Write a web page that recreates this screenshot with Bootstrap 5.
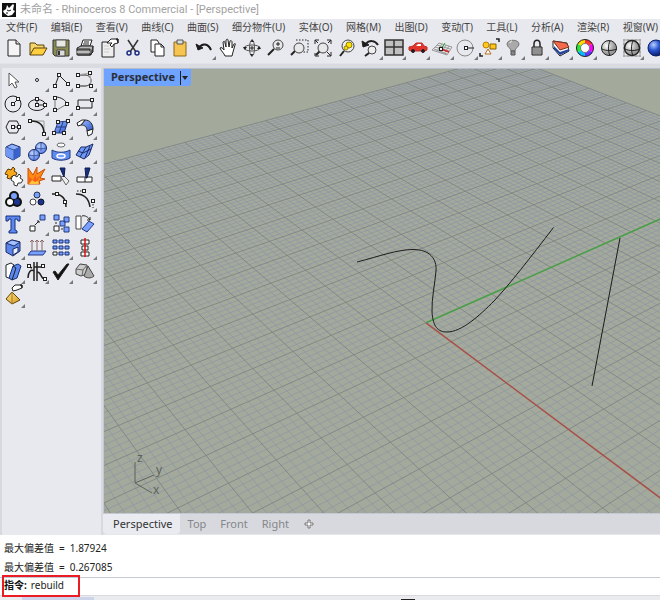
<!DOCTYPE html>
<html lang="zh-CN">
<head>
<meta charset="utf-8">
<meta name="viewport" content="width=device-width, initial-scale=1">
<title>未命名 - Rhinoceros 8 Commercial - [Perspective]</title>
<link rel="stylesheet" href="https://cdn.jsdelivr.net/npm/bootstrap@5.3.0/dist/css/bootstrap.min.css">
<style>
body{font-family:"Noto Sans","Noto Sans CJK SC",sans-serif;font-size:11px;line-height:16px;color:#222;background:#d8d9de}
.app-title{height:19px;color:#a2a2a2;padding:0 2px;font-family:Roboto,"Noto Sans CJK SC",sans-serif}
.app-title svg{width:14px;height:14px}
.app-menu{background:#e8e9ee;height:17px;padding:0 2px 0 6px}
.app-menu a{color:#444;text-decoration:none;white-space:nowrap;line-height:17px;font-size:10px}
.tool-strip{background:#e8e9ee;height:28px;border-bottom:1px solid #e2e3e8}
.tool-grid{display:grid;grid-template-columns:repeat(28,minmax(0,1fr));padding-left:2px;margin-right:-8px}
.strip-gap{height:4px;background:#d9dbe0}
.tool-panel{background:#e8e9ee;width:99px;margin-left:2px;margin-right:2px}
.panel-grid{display:grid;grid-template-columns:repeat(4,24px);margin-left:-1px}
.tool{display:flex;justify-content:center;position:relative;height:24px;padding:0;border:0;border-radius:0}
.tool svg{width:24px;height:24px;flex-shrink:0;fill:none;stroke:#222;stroke-width:1}
.fly::after{content:"";position:absolute;right:0;bottom:0;border:2px solid transparent;border-right-color:#777;border-bottom-color:#777}
.view-area{border-top:1px solid #b4bccb;border-left:1px solid #c3c9d4;background:#a3a99b}
.view-area>svg{display:block;width:100%;height:100%}
.view-label{position:absolute;left:0;top:0;height:17px;background:#6ea3ff;border-radius:0 0 3px 0;color:#2a2e38;font-size:11px;font-weight:700;padding:0 2px 0 6px;gap:5px}
.view-label span{border-left:1px solid #222;height:14px;padding:5px 0 0 1px}
.view-label svg{width:6px;height:4px;display:block}
.view-tabs{height:22px;border-top:1px solid #c3c8d2;border-bottom:1px solid #e6e7ea}
.view-tabs .btn{font-size:11px;line-height:16px;padding:1px 7px;border:0;border-radius:0 0 4px 4px;color:#85868a}
.view-tabs .btn.active{background:#e9ebf0;color:#333;padding:1px 7px 2px 10px;margin-right:1px}
.history{background:#fff;height:42px;padding:4px 4px 0;font-size:10px;line-height:19px;color:#222}
.history>div{gap:5px}
.command{background:#fff;height:19px;border-top:1px solid #c4cad4;border-bottom:1px solid #d8dade;font-size:10px;padding-left:4px}
.command label{font-weight:700;color:#111;line-height:14px}
.command input{border:0;outline:0;padding:0;font-size:10px;line-height:14px;height:14px;color:#222;background:transparent}
.hilite{position:absolute;left:2px;top:-3px;width:78px;height:22px;border:2px solid #ec1c24;pointer-events:none}
.status-strip{height:4px;background:#e9ebee;padding-left:22px}
.status-tab{width:72px;height:3px;background:#cdd4ea}
.status-mark{width:14px;height:1px;background:#222;margin-left:307px}
</style>
</head>
<body>
<svg width="0" height="0" class="position-absolute" aria-hidden="true">
<defs>
<rect id="n" x="-1.500" y="-1.500" width="3" height="3" fill="#fff" stroke="#222"/>
<linearGradient id="gb" x2="1" y2="1"><stop stop-color="#9fbcff"/><stop offset="1" stop-color="#2c55c8"/></linearGradient>
<linearGradient id="gy" x2="1" y2="1"><stop stop-color="#ffe48a"/><stop offset="1" stop-color="#d79a1c"/></linearGradient>
<radialGradient id="gs" cx=".35" cy=".35"><stop stop-color="#fff"/><stop offset="1" stop-color="#9a9a9a"/></radialGradient>
<radialGradient id="gn" cx=".35" cy=".3" r=".7"><stop stop-color="#b9d0ff"/><stop offset=".5" stop-color="#2a55d0"/><stop offset="1" stop-color="#0a1c70"/></radialGradient>
<radialGradient id="gl" cx=".4" cy=".35" r=".65"><stop stop-color="#c4d6ff"/><stop offset="1" stop-color="#5c84e8"/></radialGradient>
</defs>
</svg>
<div class="d-flex flex-column vh-100 overflow-hidden">
<header class="app-title bg-white d-flex align-items-center gap-1 flex-shrink-0">
<svg viewBox="0 0 14 14"><path d="M0 0h14v14H0z" fill="#111"/><path d="M1 8l3-2 1-4 2 3 4-4 1 1-1 5 2 1-3 4-4 1-4-3z" fill="#fff"/><path d="M5 7l2 1 2-1M4 10l2 0" stroke="#111" fill="none"/></svg>
<span>未命名 - Rhinoceros 8 Commercial - [Perspective]</span>
</header>
<nav class="app-menu d-flex justify-content-between flex-shrink-0">
<a href="#">文件(F)</a><a href="#">编辑(E)</a><a href="#">查看(V)</a><a href="#">曲线(C)</a><a href="#">曲面(S)</a><a href="#">细分物件(U)</a><a href="#">实体(O)</a><a href="#">网格(M)</a><a href="#">出图(D)</a><a href="#">变动(T)</a><a href="#">工具(L)</a><a href="#">分析(A)</a><a href="#">渲染(R)</a><a href="#">视窗(W)</a>
</nav>
<div class="tool-strip flex-shrink-0 overflow-hidden">
<div class="tool-grid">
<button class="btn tool" aria-label="New"><svg viewBox="0 0 24 24"><path d="M6 4h8l4 4v12H6z" fill="#f4f4f4"/><path d="M14 4v4h4" fill="#ddd"/></svg></button>
<button class="btn tool" aria-label="Open"><svg viewBox="0 0 24 24"><path d="M4 19V7h5l2 2h7v3" fill="#f6d66a" stroke="#5a4410"/><path d="M4 19l4-7h13l-4 7z" fill="#ffcf3f" stroke="#5a4410"/></svg></button>
<button class="btn tool fly" aria-label="Save"><svg viewBox="0 0 24 24"><path d="M4 4h16v16H6l-2-2z" fill="#8b8a50" stroke="#333"/><path d="M7 4h10v7H7z" fill="#e9e9e4" stroke="#555"/><path d="M8 14h8v6H8z" fill="#ddd" stroke="#444"/><path d="M10 15v4" stroke="#333" stroke-width="2"/></svg></button>
<button class="btn tool" aria-label="Print"><svg viewBox="0 0 24 24"><path d="M8 10l2-6h9l-2 6z" fill="#fff"/><path d="M11 6h5M10 8h6"/><path d="M4 12l4-2h12l-2 9H5z" fill="#bbb"/><path d="M4 13h13v6H4z" fill="#777"/><path d="M4 16h13" stroke="#fff"/><path d="M17 19l3-3v-6" fill="#555"/></svg></button>
<button class="btn tool" aria-label="Properties"><svg viewBox="0 0 24 24"><path d="M5 6h12v15H5z" fill="#eee"/><path d="M7 10h5M7 13h6M7 16h5" stroke="#ccc"/><path d="M10 7l4-4h7v4l-4 1-2 3-2-2 2-2z" fill="#fff"/><path d="M19 3h2v4" fill="#222"/></svg></button>
<button class="btn tool" aria-label="Cut"><svg viewBox="0 0 24 24"><path d="M7 4l8 12M17 4L9 16" stroke="#333" stroke-width="1.500"/><circle cx="8" cy="17" r="2" stroke="#1e2f80" stroke-width="1.500"/><circle cx="16" cy="17" r="2" stroke="#1e2f80" stroke-width="1.500"/></svg></button>
<button class="btn tool" aria-label="Copy"><svg viewBox="0 0 24 24"><path d="M6 4h6l2 3v9H6z" fill="#fff"/><path d="M10 8h6l3 3v9h-9z" fill="#fff"/><path d="M16 8v3h3"/></svg></button>
<button class="btn tool" aria-label="Paste"><svg viewBox="0 0 24 24"><path d="M6 6h12v14H6z" fill="#f5c451" stroke="#8a6a1c"/><path d="M9 4h6v4H9z" fill="#ddd" stroke="#555"/></svg></button>
<button class="btn tool fly" aria-label="Undo"><svg viewBox="0 0 24 24"><path d="M7 12C10 7 16 7 19 14" stroke="#1a1a1a" stroke-width="2"/><path d="M4 8l2 6 5-2z" fill="#1a1a1a"/></svg></button>
<button class="btn tool" aria-label="Pan"><svg viewBox="0 0 24 24"><path d="M9 20c-1-3-4-5-5-8 1-1 3 0 4 2L7 6c1-1 2-1 2 1l1 4V4c1-1 2-1 2 0l1 7 1-6c1-1 2 0 2 1v6l2-4c1-1 2 0 1 1l-2 7-1 4z" fill="#fff"/></svg></button>
<button class="btn tool" aria-label="Rotate view"><svg viewBox="0 0 24 24"><g stroke="#555"><ellipse cx="12" cy="12" rx="8" ry="3"/><ellipse cx="12" cy="12" rx="2.500" ry="8"/></g><path d="M12 10v4M10 12h4"/><path d="M3 11l4 0-2 3zM21 13l-4 0 2-3zM12 3l2 3h-3zM12 21l-2-3h3z" fill="#222" stroke="none"/></svg></button>
<button class="btn tool" aria-label="Zoom dynamic"><svg viewBox="0 0 24 24"><path d="M4 19l6-6" stroke-width="2"/><circle cx="14" cy="9" r="5" fill="#e8e8ea" stroke="#444"/><path d="M12 8h4M14 6v4M12 12h4"/></svg></button>
<button class="btn tool" aria-label="Zoom window"><svg viewBox="0 0 24 24"><path d="M4 19l4-4" stroke-width="2"/><circle cx="12" cy="12" r="5" fill="#e8e8ea" stroke="#444"/><path d="M9 4h12v12h-5" stroke-dasharray="1.500 1.500"/></svg></button>
<button class="btn tool" aria-label="Zoom extents"><svg viewBox="0 0 24 24"><path d="M5 19l4-4" stroke-width="2"/><circle cx="12" cy="12" r="5" fill="#e8e8ea" stroke="#444"/><path d="M4 8V4h4M16 4h4v4M20 16v4h-4M8 20H4v-3M4 4l3 3M20 4l-3 3M20 20l-4-4"/></svg></button>
<button class="btn tool" aria-label="Zoom selected"><svg viewBox="0 0 24 24"><path d="M5 20l4-5" stroke-width="2"/><circle cx="13" cy="10" r="6" fill="#eee" stroke="#444"/><circle cx="14" cy="9" r="3" fill="#ffe100" stroke="#8a7a10"/><circle cx="11" cy="12" r="2" fill="#ffe100" stroke="#8a7a10"/></svg></button>
<button class="btn tool fly" aria-label="Undo view"><svg viewBox="0 0 24 24"><path d="M7 8c3-4 9-4 12 1" stroke-width="2"/><path d="M3 5l1 6 6-2z" fill="#1a1a1a"/><circle cx="13" cy="14" r="4" fill="#eee" stroke="#444"/><path d="M6 20l4-3" stroke-width="2"/></svg></button>
<button class="btn tool fly" aria-label="Four viewports"><svg viewBox="0 0 24 24"><path d="M3 4h18v15H3z" fill="#c0c0c0" stroke="#333" stroke-width="1.500"/><path d="M12 4v15M3 11h18" stroke="#333" stroke-width="1.500"/></svg></button>
<button class="btn tool fly" aria-label="Named view"><svg viewBox="0 0 24 24"><path d="M3 14v-3l4-1 3-3h6l2 3 3 1v3l-2 1H5z" fill="#e3342c" stroke="#c0302c"/><path d="M10 10l2-2h3v2z" fill="#fff" stroke="none"/><circle cx="7" cy="15" r="1.500" fill="#222"/><circle cx="17" cy="15" r="1.500" fill="#222"/></svg></button>
<button class="btn tool fly" aria-label="Set CPlane"><svg viewBox="0 0 24 24"><path d="M2 14l7-7 13 4-5 8zM5 11l14 4M7 9l13 4M4 13l13 5M12 8l-5 7M16 9l-5 8M19 10l-5 8" stroke="#999"/><path d="M11 13l8 3" stroke="#d22" stroke-width="1.500"/><path d="M11 13l4-6" stroke="#2a2"/><use href="#n" x="11" y="13"/></svg></button>
<button class="btn tool fly" aria-label="Set view"><svg viewBox="0 0 24 24"><circle cx="11" cy="12" r="8" stroke="#888"/><path d="M11 12h9"/><use href="#n" x="12" y="12"/></svg></button>
<button class="btn tool fly" aria-label="Select"><svg viewBox="0 0 24 24"><path d="M18 3h3v3M2 17v3h3" stroke-width="1.500"/><path d="M7 18l3-5 3 5z" fill="#fff" stroke="#b56a1a"/><path d="M12 8h6v5h-6z" fill="#ffc81e" stroke="#8a6000"/><circle cx="8" cy="9" r="3" fill="#ffc81e" stroke="#c08000"/></svg></button>
<button class="btn tool fly" aria-label="Hide"><svg viewBox="0 0 24 24"><path d="M10 15c0-3-4-4-4-7 0-5 12-5 12 0 0 3-4 4-4 7z" fill="#aaa" stroke="#777"/><path d="M10 15h4v4h-4z" fill="#888" stroke="#555"/><path d="M9 7c0-1 1-2 2-2" stroke="#fff"/></svg></button>
<button class="btn tool fly" aria-label="Lock"><svg viewBox="0 0 24 24"><path d="M9 11V8c0-5 6-5 6 0v3" stroke-width="1.500"/><path d="M7 11h10v8H7z" fill="#aaa"/><path d="M8 13h8M8 15h8M8 17h8" stroke="#777"/></svg></button>
<button class="btn tool fly" aria-label="Layers"><svg viewBox="0 0 24 24"><path d="M4 5l14 2 2 8-9 5-7-8z" fill="#fff" stroke="#222"/><path d="M5 13l6 6 9-4v-2l-9 3-6-6z" fill="#22429c" stroke="none"/><path d="M4 5l13 2 3 4-9 3z" fill="#f46a4a" stroke="#732"/></svg></button>
<button class="btn tool fly" aria-label="Object colour"><svg viewBox="0 0 24 24"><g stroke-width="4"><path d="M12 5.500A6.500 6.500 0 0 1 17.600 8.800" stroke="#f33"/><path d="M17.600 8.800A6.500 6.500 0 0 1 17.600 15.200" stroke="#f0f"/><path d="M17.600 15.200A6.500 6.500 0 0 1 12 18.500" stroke="#63f"/><path d="M12 18.500A6.500 6.500 0 0 1 6.400 15.200" stroke="#0bf"/><path d="M6.400 15.200A6.500 6.500 0 0 1 6.400 8.800" stroke="#2e3"/><path d="M6.400 8.800A6.500 6.500 0 0 1 12 5.500" stroke="#fd0"/></g><circle cx="12" cy="12" r="8.500"/><circle cx="12" cy="12" r="4.500" stroke="#777" fill="#fff"/></svg></button>
<button class="btn tool" aria-label="Shade"><svg viewBox="0 0 24 24"><circle cx="12" cy="12" r="7.500" fill="url(#gs)"/><path d="M5 13c4 2 10 2 15 0M13 5c-2 4-2 10 0 15"/></svg></button>
<button class="btn tool fly" aria-label="Render preview"><svg viewBox="0 0 24 24"><path d="M3 4h18M3 8h18M3 12h18M3 16h18M3 20h18M4 3v18M8 3v18M16 3v18M20 3v18" stroke="#999"/><circle cx="12" cy="12" r="7.500" fill="url(#gs)" stroke-width="1.500"/><path d="M5 13c4 2 10 2 15 0M13 5c-2 4-2 10 0 15"/></svg></button>
<button class="btn tool" aria-label="Render"><svg viewBox="0 0 24 24"><circle cx="12" cy="12" r="8" fill="url(#gn)" stroke="#0a1c60"/></svg></button>
</div>
</div>
<div class="strip-gap flex-shrink-0"></div>
<main class="d-flex flex-grow-1 overflow-hidden">
<aside class="tool-panel flex-shrink-0">
<div class="panel-grid">
<button class="btn tool" aria-label="Pointer"><svg viewBox="0 0 24 24"><path d="M8 5v13l3-3 3 5 2-1-2-5h4z" fill="#fff" stroke="#555"/></svg></button>
<button class="btn tool fly" aria-label="Point"><svg viewBox="0 0 24 24"><circle cx="12" cy="12" r="1.500" fill="#fff"/></svg></button>
<button class="btn tool fly" aria-label="Polyline"><svg viewBox="0 0 24 24"><path d="M6 18l4-11 9 9"/><use href="#n" x="6" y="18"/><use href="#n" x="10" y="7"/><use href="#n" x="19" y="16"/></svg></button>
<button class="btn tool fly" aria-label="Curve"><svg viewBox="0 0 24 24"><path d="M4 7h8c8 0 8 11 0 11H5"/><path d="M4 7l13-2M17 5l1 13" stroke="#aaa"/><use href="#n" x="5" y="7"/><use href="#n" x="17" y="5"/><use href="#n" x="18" y="18"/><use href="#n" x="5" y="18"/></svg></button>

<button class="btn tool fly" aria-label="Circle"><svg viewBox="0 0 24 24"><circle cx="12" cy="12" r="8"/><path d="M12 12l5-5"/><use href="#n" x="12" y="12"/><use href="#n" x="17" y="7"/></svg></button>
<button class="btn tool fly" aria-label="Ellipse"><svg viewBox="0 0 24 24"><ellipse cx="12" cy="13" rx="8.500" ry="5.500"/><path d="M12 7v6h8"/><use href="#n" x="12" y="7"/><use href="#n" x="12" y="13"/><use href="#n" x="20" y="13"/></svg></button>
<button class="btn tool fly" aria-label="Arc"><svg viewBox="0 0 24 24"><path d="M6 5v14l12-7" stroke="#777"/><path d="M6 5c7 0 11 4 12 7"/><use href="#n" x="6" y="6"/><use href="#n" x="18" y="12"/><use href="#n" x="6" y="18"/></svg></button>
<button class="btn tool fly" aria-label="Rectangle"><svg viewBox="0 0 24 24"><path d="M5 8h14v8H5z"/><use href="#n" x="5" y="16"/><use href="#n" x="19" y="8"/></svg></button>

<button class="btn tool fly" aria-label="Polygon"><svg viewBox="0 0 24 24"><path d="M8 5h8l3 6-3 6H8l-3-6z"/><path d="M12 11h6"/><use href="#n" x="12" y="11"/><use href="#n" x="18" y="11"/></svg></button>
<button class="btn tool fly" aria-label="Fillet curves"><svg viewBox="0 0 24 24"><path d="M6 5h13v13" stroke="#999"/><path d="M6 5c9 0 13 4 13 13" stroke-width="1.500"/><use href="#n" x="5" y="5"/><use href="#n" x="19" y="18"/></svg></button>
<button class="btn tool fly" aria-label="Surface from points"><svg viewBox="0 0 24 24"><path d="M9 6l10-1-4 12-10 0z" fill="url(#gb)" stroke="#223a80"/><path d="M14 6l-4 11M7 11h10" stroke="#223a80"/><use href="#n" x="9" y="6"/><use href="#n" x="19" y="5"/><use href="#n" x="5" y="17"/><use href="#n" x="15" y="17"/></svg></button>
<button class="btn tool fly" aria-label="Sweep"><svg viewBox="0 0 24 24"><path d="M8 9l4-5c5 0 8 4 8 9l-6 2c0-4-2-6-6-6z" fill="url(#gb)" stroke="#223"/><path d="M4 7l5-3h3L8 9l-3 1z" fill="#fff"/><path d="M14 15l6-2-1 5-4 2z" fill="#fff"/></svg></button>

<button class="btn tool fly" aria-label="Box"><svg viewBox="0 0 24 24"><path d="M5 7l6-3 8 3v9l-7 4-7-4z" fill="#8fb0ff" stroke="#1a2c66"/><path d="M5 7l8 3v10l-8-4z" fill="#7298f6" stroke="none"/><path d="M13 10l6-3v9l-6 4z" fill="#3a62cf" stroke="none"/><path d="M5 7l8 3 6-3M13 10v10" stroke="#3a58a8"/></svg></button>
<button class="btn tool fly" aria-label="Boolean"><svg viewBox="0 0 24 24"><circle cx="16" cy="8" r="5.500" fill="url(#gl)" stroke="#1a2c66"/><circle cx="9" cy="15" r="5.500" fill="url(#gl)" stroke="#1a2c66"/><path d="M16 3v8M11 8c3 1 7 1 10 0M9 10v10M4 15c3 1 7 1 10 0" stroke="#3a58a8"/></svg></button>
<button class="btn tool fly" aria-label="Project"><svg viewBox="0 0 24 24"><ellipse cx="12" cy="5" rx="4" ry="2" fill="#fff" stroke="#666"/><path d="M3 10c5 3 13 3 18 0v8c-5 3-13 3-18 0z" fill="#5f8af0" stroke="#223a80"/><ellipse cx="12" cy="16" rx="4" ry="2" fill="#7aa0ff" stroke="#fff" stroke-width="1.500"/></svg></button>
<button class="btn tool fly" aria-label="Mesh"><svg viewBox="0 0 24 24"><path d="M3 15l5-8 5 0 7-3-4 11-5 4z" fill="#7298f6" stroke="#1a2c66"/><path d="M5 11l5 2 8-4M13 7l-6 10M17 6l-5 12" stroke="#1a2c66"/></svg></button>

<button class="btn tool fly" aria-label="Join"><svg viewBox="0 0 24 24"><path d="M5 8l2-3 3 1 2-3 2 2-1 2 3 2-2 4-3-1-2 3-3-1 1-3-3-1z" fill="#f9a81c" stroke="#5a3a00"/><path d="M11 13l2-2 3 2 2-3 2 2-1 2 3 2-2 3-3 0-1 3-3-1 0-3-3-2z" fill="#fff" stroke="#333"/></svg></button>
<button class="btn tool" aria-label="Explode"><svg viewBox="0 0 24 24"><path d="M3 20V4l5 7 4-8v7l8-5-5 9 5 1-6 2 1 3z" fill="#ff8a14" stroke="#c8500a"/><path d="M4 20v-7l4 3 3-6v5l5-4-4 6z" fill="#f2601a" stroke="none"/><path d="M4 20l3-4 3 2 3-1 1 3z" fill="#ffc23a" stroke="none"/></svg></button>
<button class="btn tool" aria-label="Trim"><svg viewBox="0 0 24 24"><path d="M3 12h9v5H3z" fill="#fff"/><path d="M12 13l3-1 5 5-3 4z" fill="#eee" stroke="#666"/><path d="M11 4h5l-1 9z" fill="#16307c" stroke="#0c1c50"/></svg></button>
<button class="btn tool" aria-label="Split"><svg viewBox="0 0 24 24"><path d="M4 13h15v5H4z" fill="#fff"/><path d="M12 13v5"/><path d="M12 4h5l-3 10h-1z" fill="#16307c" stroke="#0c1c50"/></svg></button>

<button class="btn tool fly" aria-label="Group"><svg viewBox="0 0 24 24"><g fill="#111" stroke="none"><circle cx="13" cy="8" r="5"/><circle cx="9" cy="14" r="5"/><circle cx="16" cy="14" r="5"/></g><circle cx="13" cy="8" r="3" fill="#7aa0ff" stroke="none"/><circle cx="9" cy="14" r="3" fill="#fff" stroke="none"/><circle cx="16" cy="14" r="3" fill="#1a3590" stroke="none"/></svg></button>
<button class="btn tool" aria-label="Ungroup"><svg viewBox="0 0 24 24"><circle cx="12" cy="7" r="3" fill="#7aa0ff" stroke="#234"/><circle cx="8" cy="14" r="3" fill="#fff" stroke="#444"/><circle cx="16" cy="14" r="3" fill="#1a3590" stroke="#112"/></svg></button>
<button class="btn tool" aria-label="Edit points"><svg viewBox="0 0 24 24"><path d="M3 6c10-1 14 5 14 13" stroke-width="1.500"/><use href="#n" x="8" y="6"/><use href="#n" x="16" y="14"/></svg></button>
<button class="btn tool fly" aria-label="Control points"><svg viewBox="0 0 24 24"><path d="M3 6c9 0 13 6 14 13" stroke-width="1.500"/><path d="M4 3h7M20 13v7" stroke-dasharray="1.500 1.500"/><use href="#n" x="11" y="3"/><use href="#n" x="20" y="13"/></svg></button>

<button class="btn tool" aria-label="Text"><svg viewBox="0 0 24 24"><path d="M5 4h14v5h-2l-1-2h-2v11l2 1v2H8v-2l2-1V7H8L7 9H5z" fill="#5b87ee" stroke="#16307c"/></svg></button>
<button class="btn tool fly" aria-label="Move"><svg viewBox="0 0 24 24"><path d="M5 14h5v5H5z" fill="#fff"/><path d="M15 3h5v5h-5z" fill="#7aa0ff" stroke="#223a80"/><path d="M10 13l4-4M12 9h2v2"/></svg></button>
<button class="btn tool" aria-label="Copy objects"><svg viewBox="0 0 24 24"><g fill="#7aa0ff" stroke="#223a80"><path d="M5 3h5v5H5zM15 5h5v5h-5zM11 9h5v5h-5zM15 15h5v5h-5z"/></g><path d="M5 14h5v5H5z" fill="#fff"/><path d="M7 10v2M12 17h2"/></svg></button>
<button class="btn tool" aria-label="Rotate"><svg viewBox="0 0 24 24"><path d="M3 4h5v13H3z" fill="#fff" stroke="#444"/><path d="M16 9l5 3-7 8-5-3z" fill="#7aa0ff" stroke="#223a80"/><path d="M9 4c3-1 6 1 8 4M17 5v3h-3"/></svg></button>

<button class="btn tool fly" aria-label="Solid edit"><svg viewBox="0 0 24 24"><path d="M5 7l6-3 8 2v9l-7 5-7-4z" fill="#5b85ea" stroke="#1a2c66"/><path d="M5 7l6-3 8 2-6 4z" fill="#a5c0ff" stroke="#1a2c66"/><path d="M12 13l5-2v5l-5 3z" fill="#e8eeff" stroke="#1a2c66"/></svg></button>
<button class="btn tool" aria-label="Extrude"><svg viewBox="0 0 24 24"><path d="M6 15h15l-3 4H3z" fill="#7aa0ff" stroke="#223a80"/><path d="M7 15V4M12 15V4M17 15V4M5 6l2-2 2 2M10 6l2-2 2 2M15 6l2-2 2 2" stroke="#866"/></svg></button>
<button class="btn tool fly" aria-label="Array"><svg viewBox="0 0 24 24"><g fill="#7aa0ff" stroke="#16307c"><path d="M4 4h4v3H4zM10 4h4v3h-4zM16 4h4v3h-4zM4 10h4v3H4zM10 10h4v3h-4zM16 10h4v3h-4zM10 16h4v3h-4zM16 16h4v3h-4z"/></g><path d="M4 16h4v3H4z" fill="#fff"/></svg></button>
<button class="btn tool fly" aria-label="Align"><svg viewBox="0 0 24 24"><path d="M8 4h8v4H8zM9 10h6v4H9zM8 16h8v4H8z" fill="#fff"/><path d="M12 2v19" stroke="#e01010" stroke-width="1.500"/></svg></button>

<button class="btn tool fly" aria-label="Dimension"><svg viewBox="0 0 24 24"><path d="M5 5l5-2 3 2-3 14-5-2z" fill="#fff"/><path d="M12 6l5-2 3 2-4 12-5 2-3-2z" fill="#5b87ee" stroke="#16307c"/><path d="M12 6l3 2-4 12"/></svg></button>
<button class="btn tool fly" aria-label="History"><svg viewBox="0 0 24 24"><path d="M12 2v19M9 2v19" stroke-width="1.500"/><path d="M3 18c0-6 3-9 6-7M3 6l4 2M12 12c5 0 3 7 8 7M9 7h9" stroke-width="1.500"/><use href="#n" x="4" y="6"/><use href="#n" x="18" y="6"/><use href="#n" x="20" y="19"/></svg></button>
<button class="btn tool fly" aria-label="Check"><svg viewBox="0 0 24 24"><path d="M4 12l2-1 3 4 9-11h2L9 20z" fill="#111"/></svg></button>
<button class="btn tool fly" aria-label="Primitives"><svg viewBox="0 0 24 24"><path d="M3 9l4-5 7 1v9l-6 2-5-2z" fill="#ccc" stroke="#444"/><path d="M3 9l7 1 4-5M10 10l-1 6" stroke="#666"/><path d="M15 6l6 10c-3 3-8 2-10 0z" fill="#aaa" stroke="#444"/></svg></button>

<button class="btn tool fly" aria-label="Paint"><svg viewBox="0 0 24 24"><path d="M5 15l6-7 8 8-8 4z" fill="url(#gy)" stroke="#5a4410"/><path d="M11 8v12" stroke="#a67a1a"/><path d="M11 4l3-3h7v3l-5 2-4 1z" fill="#fff"/><path d="M19 1h2v3" fill="#222"/></svg></button>
</div>
</aside>
<section class="d-flex flex-column flex-grow-1 overflow-hidden">
<div class="view-area position-relative flex-grow-1 overflow-hidden">
<svg viewBox="0 0 556 445" preserveAspectRatio="xMinYMin slice" fill="none" role="img" aria-label="Perspective view">
<path id="minor" stroke="#8b93a6" stroke-opacity=".6"/>
<path id="major" stroke="#7b8186" stroke-opacity=".8"/>
<path id="axisX" stroke="#a9504a" stroke-width="1.500"/>
<path id="axisY" stroke="#4a9f4a" stroke-width="1.500"/>
<path d="M253 193C276 187 294 180.500 309 180.500C326 180.500 333 190 332 202C331 214 327.500 230 328 243C329 258 334 263 343 263C358 263 376 246 390 232C406 215 426 189 449.500 158.500M516 169l-28 148" stroke="#1c1c1c"/>
<path d="M31 393v21l19-8M31 414l17 10" stroke="#5d625b"/>
<g fill="#5d625b" font-size="12"><text x="33" y="393">z</text><text x="52" y="405">y</text><text x="49" y="425">x</text></g>
</svg>
<button class="btn view-label d-flex align-items-center">Perspective<span><svg viewBox="0 0 6 4"><path d="M0 0h6L3 4z" fill="#222"/></svg></span></button>
</div>
<div class="view-tabs d-flex flex-shrink-0">
<button class="btn active">Perspective</button><button class="btn">Top</button><button class="btn">Front</button><button class="btn">Right</button>
<button class="btn px-2" aria-label="New viewport tab"><svg class="d-block" width="10" height="10" viewBox="0 0 10 10"><path d="M4 1h2v3h3v2H6v3H4V6H1V4h3z" fill="#fff" stroke="#777"/></svg></button>
</div>
</section>
</main>
<div class="history flex-shrink-0"><div class="d-flex"><span>最大偏差值</span><span>=</span><span>1.87924</span></div><div class="d-flex"><span>最大偏差值</span><span>=</span><span>0.267085</span></div></div>
<div class="command position-relative d-flex gap-1 flex-shrink-0"><label for="cmd">指令:</label><input id="cmd" class="flex-grow-1" type="text" value="rebuild"><div class="hilite"></div></div>
<footer class="status-strip d-flex flex-shrink-0 align-items-end"><div class="status-tab"></div><div class="status-mark"></div></footer>
</div>
<script src="https://cdn.jsdelivr.net/npm/bootstrap@5.3.0/dist/js/bootstrap.bundle.min.js"></script>
<script>
// Camera matrix of the perspective view: construction plane (x, y) to view pixels.
const cam = [2.972772, 8.423771, 322.0243, 2.145315, -1.806472, 253.8312, -0.005876687, 0.00485918];
const EXTENT = 70, NEAR = 0.2;
const depth = (x, y) => cam[6] * x + cam[7] * y + 1;
const project = (x, y) => {
  const w = depth(x, y);
  return ((cam[0] * x + cam[1] * y + cam[2]) / w).toFixed(1) + ' ' + ((cam[3] * x + cam[4] * y + cam[5]) / w).toFixed(1);
};
function segment(a, b) {
  const da = depth(...a), db = depth(...b);
  if (da < NEAR && db < NEAR) return '';
  const cut = (p, q, dp, dq) => { const t = (NEAR - dp) / (dq - dp); return [p[0] + (q[0] - p[0]) * t, p[1] + (q[1] - p[1]) * t]; };
  if (da < NEAR) a = cut(a, b, da, db);
  if (db < NEAR) b = cut(b, a, db, da);
  return 'M' + project(...a) + 'L' + project(...b);
}
const lines = { minor: '', major: '' };
for (let i = -EXTENT; i <= EXTENT; i++) {
  const kind = i % 5 ? 'minor' : 'major';
  lines[kind] += segment([i, -EXTENT], [i, EXTENT]) + segment([-EXTENT, i], [EXTENT, i]);
}
document.getElementById('minor').setAttribute('d', lines.minor);
document.getElementById('major').setAttribute('d', lines.major);
document.getElementById('axisX').setAttribute('d', segment([0, 0], [EXTENT, 0]));
document.getElementById('axisY').setAttribute('d', segment([0, 0], [0, EXTENT]));
</script>
</body>
</html>
